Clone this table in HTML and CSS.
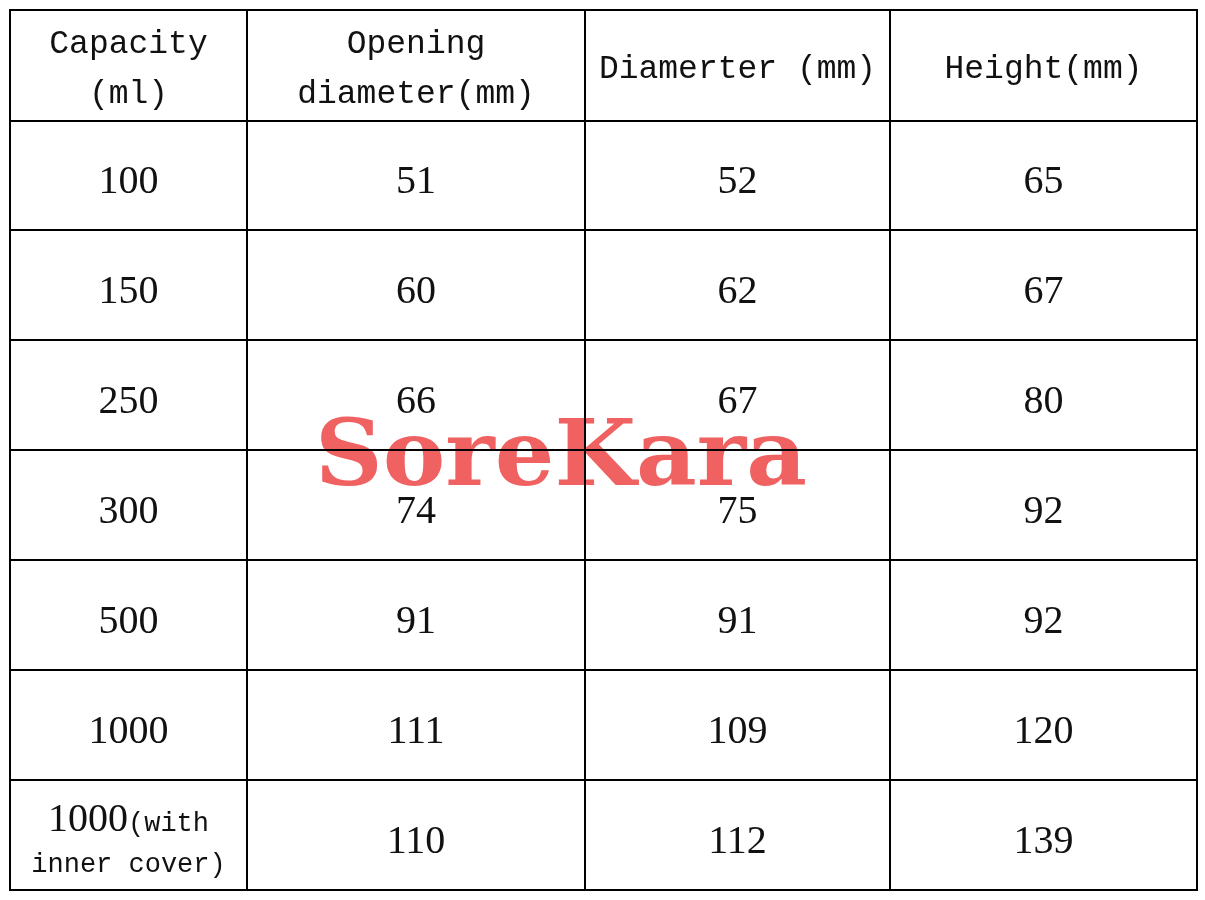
FILE: index.html
```html
<!DOCTYPE html>
<html>
<head>
<meta charset="utf-8">
<link rel="stylesheet" href="styles.css">
</head>
<body>
<div class="sheet">
  <table class="spec">
    <colgroup>
      <col class="c1"><col class="c2"><col class="c3"><col class="c4">
    </colgroup>
    <tr class="head">
      <td>Capacity<br>(ml)</td>
      <td>Opening<br>diameter(mm)</td>
      <td>Diamerter (mm)</td>
      <td>Height(mm)</td>
    </tr>
    <tr class="first"><td>100</td><td>51</td><td>52</td><td>65</td></tr>
    <tr><td>150</td><td>60</td><td>62</td><td>67</td></tr>
    <tr><td>250</td><td>66</td><td>67</td><td>80</td></tr>
    <tr><td>300</td><td>74</td><td>75</td><td>92</td></tr>
    <tr><td>500</td><td>91</td><td>91</td><td>92</td></tr>
    <tr><td>1000</td><td>111</td><td>109</td><td>120</td></tr>
    <tr class="last"><td class="note"><span class="big">1000</span>(with<br>inner cover)</td><td>110</td><td>112</td><td>139</td></tr>
  </table>
  <div class="mark">SoreKara</div>
</div>
</body>
</html>
```
FILE: styles.css
```css
html, body {
  margin: 0;
  padding: 0;
  background: #ffffff;
}
.sheet {
  position: relative;
  padding: 9px 0 0 9px;
}
.spec {
  border-collapse: collapse;
  table-layout: fixed;
  width: 1187px;
  color: #111111;
  font-family: "Liberation Serif", serif;
}
.c1 { width: 237px; }
.c2 { width: 338px; }
.c3 { width: 305px; }
.c4 { width: 307px; }
.spec td {
  border: 2px solid #000000;
  text-align: center;
  vertical-align: middle;
  padding: 9px 0 0 0;
  height: 99px;
  font-size: 40px;
  line-height: 44px;
}
.spec tr.first td {
  height: 98px;
}
.spec tr.head td {
  height: 101px;
  padding-top: 8px;
  font-family: "Liberation Mono", monospace;
  font-size: 33px;
  line-height: 50px;
}
.spec td.note {
  height: 88px;
  padding-top: 20px;
  font-family: "Liberation Mono", monospace;
  font-size: 27px;
  line-height: 41px;
}
.big {
  font-family: "Liberation Serif", serif;
  font-size: 40px;
  line-height: 20px;
}
.mark {
  position: absolute;
  left: 315px;
  top: 403px;
  font-family: "DejaVu Serif", serif;
  font-weight: bold;
  font-size: 92px;
  line-height: 100px;
  color: #f06262;
  mix-blend-mode: multiply;
  pointer-events: none;
  white-space: nowrap;
  transform: scaleX(1.02);
  transform-origin: left top;
}
```
